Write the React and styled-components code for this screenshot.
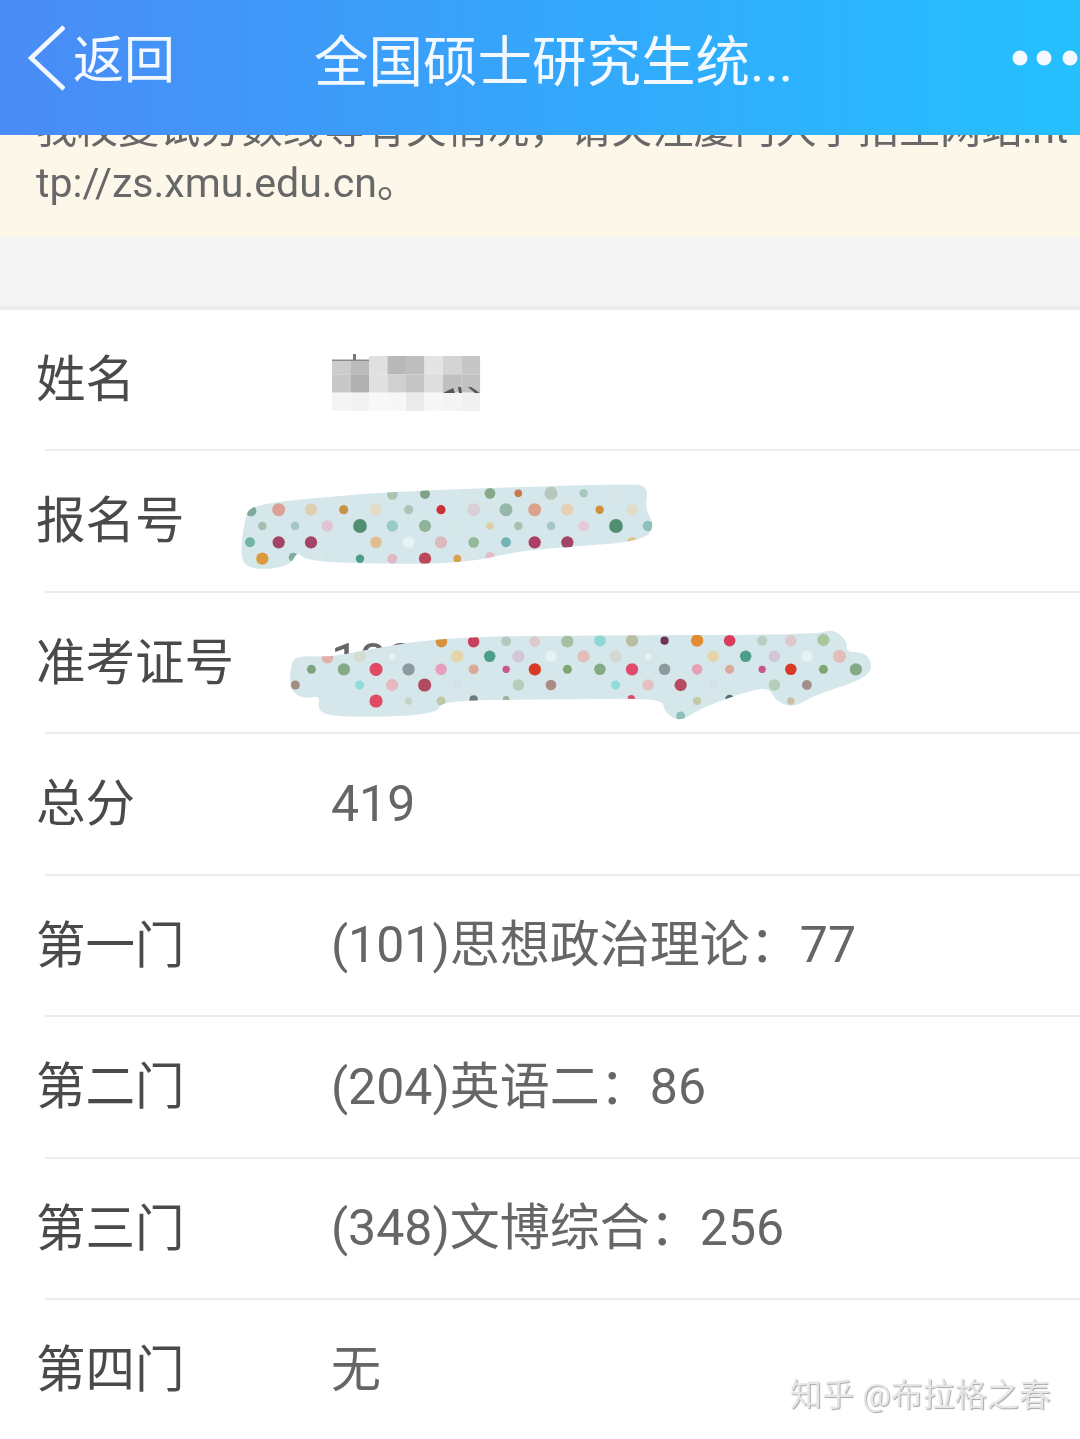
import React from 'react';
import styled, { createGlobalStyle } from 'styled-components';

const GlobalStyle = createGlobalStyle`
  html, body {
    margin: 0;
    padding: 0;
    background: #fff;
  }
  body {
    font-family: Roboto, "Noto Sans CJK SC", sans-serif;
  }
`;

const Page = styled.div`
  position: relative;
  width: 1080px;
  height: 1439px;
  overflow: hidden;
  background: #fff;
  filter: blur(0.45px);
`;

const Header = styled.header`
  display: flex;
  align-items: center;
  height: 116px;
  padding: 0 0 19px 28px;
  background: linear-gradient(90deg, #4a8bf6 0%, #35a6fb 50%, #24c0ff 100%);
  color: #f4f9ff;
`;

const BackText = styled.span`
  margin: 4px 0 0 8px;
  font-size: 51px;
  line-height: 1;
`;

const Title = styled.h1`
  flex: 1;
  margin: 9px 0 0 139px;
  font-size: 54.5px;
  font-weight: 400;
  line-height: 1;
  white-space: nowrap;
`;

const Notice = styled.section`
  height: 102px;
  overflow: hidden;
  background: #fdf7ea;
`;

const NoticeText = styled.p`
  margin: -33px 0 0;
  padding: 0 0 0 36px;
  font-size: 41.1px;
  line-height: 54px;
  color: #686868;
  white-space: nowrap;
`;

const Gap = styled.div`
  height: 68.5px;
  background: #f4f4f4;
`;

const List = styled.section`
  border-top: 4px solid #ededed;
  background: #fff;
`;

const Row = styled.div`
  position: relative;
  display: flex;
  align-items: center;
  box-sizing: border-box;
  height: 141.5px;
  padding-left: 36px;

  &::after {
    content: '';
    position: absolute;
    left: 45px;
    right: 0;
    bottom: 0;
    height: 2px;
    background: #ececec;
  }
`;

const Label = styled.div`
  width: 295px;
  flex: none;
  font-size: 49.5px;
  line-height: 1;
  color: #4a4a4a;
`;

const Value = styled.div`
  margin-bottom: 2px;
  font-size: 50px;
  line-height: 1;
  color: #666;
  white-space: nowrap;
`;

const Overlay = styled.svg`
  position: absolute;
  left: ${p => p.$left}px;
  top: ${p => p.$top}px;
`;

const Watermark = styled.div`
  position: absolute;
  left: 790px;
  top: 1375px;
  font-size: 32px;
  line-height: 40px;
  color: #e6e6e6;
  text-shadow: 1px 1px 1px #a8a8a8;
  white-space: nowrap;
`;

// smooth outline through the given points
const smoothPath = pts => {
  const mid = (a, b) => [(a[0] + b[0]) / 2, (a[1] + b[1]) / 2];
  const start = mid(pts[pts.length - 1], pts[0]);
  let d = `M${start[0]} ${start[1]}`;
  pts.forEach((p, i) => {
    const m = mid(p, pts[(i + 1) % pts.length]);
    d += ` Q${p[0]} ${p[1]} ${m[0]} ${m[1]}`;
  });
  return d + 'Z';
};

const Blot = ({ id, left, top, width, height, sx, sy, outline, originY = 0, dots }) => {
  const tf = `scale(${sx} ${sy}) translate(0 ${-originY})`;
  const d = smoothPath(outline);
  return (
    <Overlay $left={left} $top={top} width={width} height={height} viewBox={`0 0 ${width} ${height}`}>
      <clipPath id={id}>
        <path d={d} transform={tf} />
      </clipPath>
      <path d={d} transform={tf} fill="#d5e7ea" />
      <g clipPath={`url(#${id})`}>
        {dots.map(([x, y, c, r], i) => (
          <circle key={i} cx={x * sx} cy={(y - originY) * sy} r={1.15 * r * (sx + sy) / 2} fill={c} />
        ))}
      </g>
    </Overlay>
  );
};

const blotOne = {
  outline: [[45, 570], [60, 530], [200, 510], [480, 488], [800, 475], [1195, 463], [1255, 470], [1245, 540], [1275, 590], [1240, 635], [1000, 655], [870, 665], [700, 702], [400, 704], [225, 694], [203, 665], [180, 708], [100, 722], [36, 708], [34, 640]],
  dots: [
    [487, 495, '#a9c4b0', 14], [585, 494, '#7fa388', 13], [683, 491, '#dbe9ea', 8], [780, 492, '#86a988', 14], [865, 492, '#c9784a', 10], [963, 492, '#b5c8bb', 17], [1061, 492, '#a9c8bd', 11], [1158, 492, '#d6e5e5', 14],
    [63, 545, '#7fa89a', 14], [146, 541, '#dd9f96', 17], [243, 541, '#e0cfaf', 16], [341, 541, '#c7934a', 12], [438, 541, '#e0dcc8', 16], [536, 541, '#a9c6b8', 12], [633, 541, '#c8333a', 12], [731, 541, '#dcd0d8', 17], [828, 541, '#96b8aa', 17], [914, 541, '#dba18c', 17], [1012, 541, '#e6d0b5', 16], [1109, 541, '#cf8f3f', 11], [1207, 541, '#e0dcc5', 15],
    [97, 590, '#a3bfb0', 11], [195, 590, '#a7c4c7', 11], [292, 590, '#dfc4d2', 15], [390, 590, '#4f8f70', 18], [487, 590, '#96cbc7', 15], [585, 590, '#8fb398', 16], [683, 590, '#d5e6e8', 10], [780, 590, '#dccfa8', 10], [865, 590, '#a6c2ac', 11], [963, 590, '#a5c6c8', 11], [1061, 590, '#e6c8d6', 14], [1158, 590, '#4f8f70', 18], [1254, 590, '#90c0bc', 14],
    [60, 639, '#72b5a5', 13], [146, 639, '#a34466', 16], [243, 639, '#a34466', 16], [438, 639, '#e0bd90', 15], [536, 639, '#e6f2f5', 15], [633, 639, '#dcb9bc', 16], [731, 639, '#94b89c', 14], [828, 639, '#72b3b8', 13], [914, 639, '#ab3f65', 16], [1012, 639, '#a34466', 16], [1207, 639, '#dfc48c', 14],
    [97, 688, '#dd9a3c', 16], [190, 684, '#7fae9a', 12], [292, 688, '#d3e4e4', 8], [390, 688, '#4f9c8a', 11], [487, 688, '#dcb9c5', 13], [585, 688, '#bf4658', 16], [682, 688, '#d9a050', 10], [780, 682, '#e3bcc8', 12],
  ],
};

const blotTwo = {
  outline: [[26, 150], [38, 106], [130, 112], [200, 95], [420, 52], [800, 46], [1400, 44], [1445, 26], [1484, 65], [1478, 96], [1535, 98], [1550, 150], [1510, 184], [1400, 224], [1340, 264], [1295, 242], [1280, 205], [1230, 210], [1100, 264], [1045, 306], [1005, 278], [1000, 235], [800, 238], [420, 240], [415, 278], [300, 290], [130, 290], [98, 268], [105, 225], [60, 238], [26, 208]],
  dots: [
    [422, 65, '#d8923e', 14], [506, 65, '#c9405e', 14], [591, 64, '#b3c9c0', 12], [666, 65, '#dcc9c9', 13], [751, 64, '#a6c0a5', 15], [836, 62, '#8ed6d3', 14], [920, 62, '#b8bfa0', 15], [1005, 62, '#6e3355', 10], [1090, 62, '#e08c2f', 15], [1175, 62, '#d93d5e', 14], [1260, 62, '#b6cfc2', 12], [1335, 62, '#dcc9c9', 14], [1420, 60, '#a9c79f', 15],
    [124, 113, '#e0b0aa', 14], [208, 109, '#d5dcd0', 15], [293, 109, '#e6f2f5', 8], [463, 109, '#e3d5a9', 15], [548, 109, '#4f9c8a', 14], [623, 109, '#d3c6d8', 15], [708, 109, '#e6f2f5', 14], [793, 109, '#e3bdb8', 15], [877, 109, '#d5d8d0', 15], [962, 109, '#e6f2f5', 8], [1132, 109, '#e3d5a9', 14], [1217, 109, '#4f9c8a', 14], [1292, 109, '#d3c6d8', 14], [1377, 109, '#e6f2f5', 14], [1462, 109, '#e3bdb8', 16],
    [82, 148, '#7fa37c', 11], [167, 148, '#82ab86', 15], [251, 148, '#e04a63', 16], [336, 148, '#8c9aa0', 15], [421, 148, '#e6a0bd', 14], [506, 148, '#dba89a', 12], [591, 148, '#c9568c', 9], [666, 148, '#d93a26', 15], [751, 148, '#7fa670', 11], [836, 148, '#82ab86', 14], [920, 148, '#e04a6d', 15], [1005, 148, '#8c9aa0', 14], [1090, 148, '#e6a0b5', 13], [1175, 148, '#dba89a', 11], [1260, 148, '#c9568c', 9], [1335, 148, '#d93a26', 14], [1420, 148, '#7fa670', 11], [1505, 148, '#82ab86', 15],
    [40, 195, '#a08c80', 11], [208, 195, '#8edcdc', 11], [293, 195, '#e6b8c0', 15], [378, 195, '#b04a5e', 16], [463, 195, '#d5dfe8', 11], [623, 195, '#b3cdb8', 14], [708, 195, '#ab8c84', 13], [877, 195, '#8edcdc', 11], [962, 195, '#e6c0c0', 14], [1047, 195, '#b84a62', 15], [1132, 195, '#d5dfe8', 11], [1292, 195, '#b3cdb8', 14], [1377, 195, '#a3908a', 12],
    [251, 243, '#e04a63', 16], [336, 243, '#c3d5c3', 9], [421, 243, '#bcc7a8', 11], [506, 238, '#6e7a78', 10], [591, 238, '#9fb0a0', 8], [918, 236, '#d94a70', 9], [1090, 243, '#c5c9a8', 10], [1175, 238, '#4f6f68', 11], [1335, 243, '#c9c0a8', 9], [1047, 288, '#8fc0b8', 11],
  ],
};

// grey blocks over the name
const mosaic = [
  ['#cccccc', '#bababa', '#e0e0e0', '#b8b8b8', '#bebebe', '#e4e4e4', '#d4d4d4', '#c6c6c6'],
  ['#c8c8c8', '#b0b0b0', '#e0e0e0', '#d0d0d0', '#c6c6c6', '#dedede', '#c0c0c0', '#c2c2c2'],
  ['#f4f4f4', '#f2f2f2', '#f8f8f8', '#f7f7f7', '#eaeaea', '#f7f7f7', '#f4f4f4', '#f1f1f1'],
];

const NameMosaic = () => (
  <Overlay $left={332} $top={41} width={150} height={62} viewBox="0 0 150 62">
    {mosaic.map((cells, y) =>
      cells.map((c, x) => (
        <rect key={`${x}-${y}`} x={x * 18.5} y={5 + y * 18.3} width={18.6} height={18.4} fill={c} />
      ))
    )}
    <rect x="0" y="4" width="37" height="5" fill="#fff" />
    <rect x="0" y="8.5" width="37" height="1.5" fill="#8a8a8a" />
    <rect x="21" y="3" width="3" height="6" fill="#777" />
    <path d="M111 42l10-5 2 5zM126 36l1 6h3l-1-6zM136 36l7 6h5l-9-6z" fill="#555" />
  </Overlay>
);

const scores = [
  ['总分', '419'],
  ['第一门', '(101)思想政治理论：77'],
  ['第二门', '(204)英语二：86'],
  ['第三门', '(348)文博综合：256'],
  ['第四门', '无'],
];

const App = () => (
  <Page>
    <GlobalStyle />
    <Header>
      <svg width="37" height="66" viewBox="0 0 37 66" fill="none">
        <path d="M36 2L3 33l33 31" stroke="#f4f9ff" strokeWidth="4.5" />
      </svg>
      <BackText>返回</BackText>
      <Title>全国硕士研究生统...</Title>
      <svg width="68" height="20" viewBox="0 0 68 20" fill="#f4f9ff">
        <circle cx="8" cy="10" r="7.5" />
        <circle cx="32" cy="10" r="7.5" />
        <circle cx="58" cy="10" r="7.5" />
      </svg>
    </Header>
    <Notice>
      <NoticeText>
        我校复试分数线等有关情况，请关注厦门大学招生网站:ht
        <br />
        tp://zs.xmu.edu.cn。
      </NoticeText>
    </Notice>
    <Gap />
    <List>
      <Row>
        <Label>姓名</Label>
        <NameMosaic />
      </Row>
      <Row>
        <Label>报名号</Label>
        <Blot id="blot-one" left={230} top={25} width={440} height={104} sx={1 / 3} sy={1 / 3} originY={440} {...blotOne} />
      </Row>
      <Row>
        <Label>准考证号</Label>
        <Value>1038</Value>
        <Blot id="blot-two" left={280} top={27} width={600} height={110} sx={600 / 1568} sy={1 / 3} {...blotTwo} />
      </Row>
      {scores.map(([label, value]) => (
        <Row key={label}>
          <Label>{label}</Label>
          <Value>{value}</Value>
        </Row>
      ))}
    </List>
    <Watermark>知乎 @布拉格之春</Watermark>
  </Page>
);

export default App;
